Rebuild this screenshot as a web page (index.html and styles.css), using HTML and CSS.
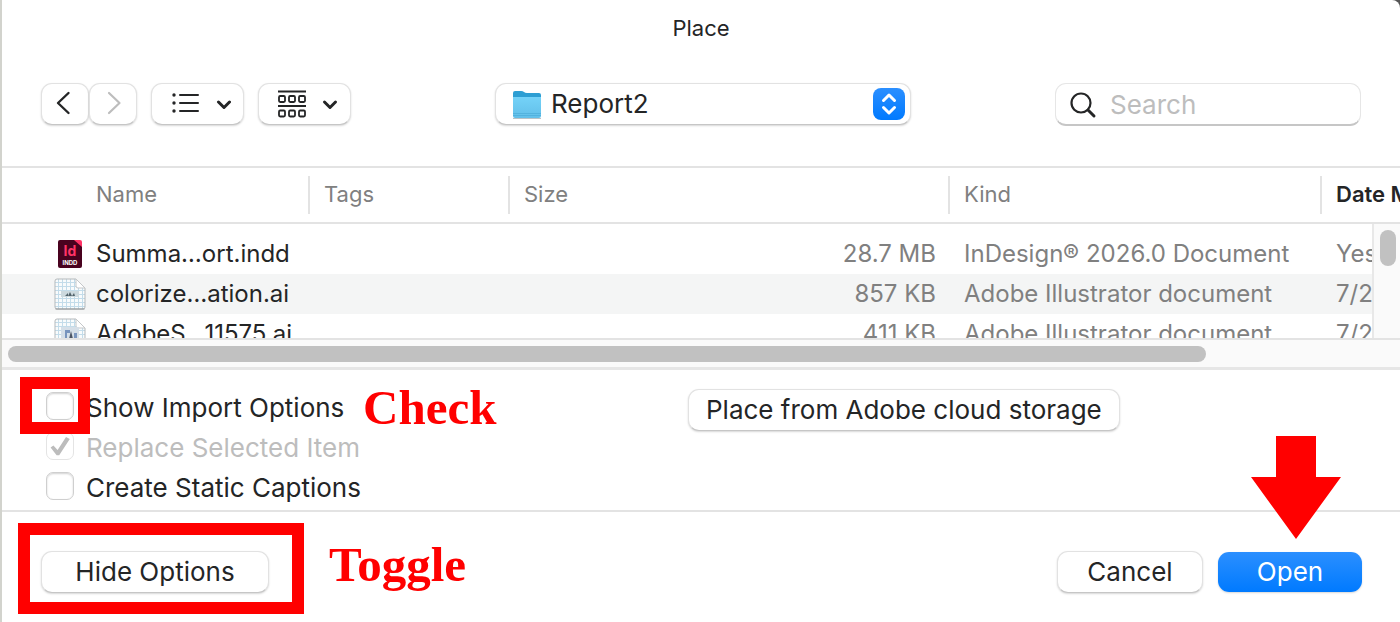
FILE: index.html
```
<!DOCTYPE html>
<html lang="en">
<head>
    <meta charset="UTF-8">
    <meta name="viewport" content="width=device-width, initial-scale=1.0">
    <title>Place</title>
    <link rel="stylesheet" href="styles.css">
</head>
<body>
    <main class="dialog">
        <h1 class="title">Place</h1>

        <div class="toolbar">
            <div class="tool-group">
                <div class="nav">
                    <button class="btn nav-btn" aria-label="Back">
                        <svg width="20" height="24" viewBox="0 0 20 24" fill="none" stroke="#242526" stroke-width="2.4" stroke-linecap="round" stroke-linejoin="round"><path d="M13.500 2 L3 12 L13.500 22"/></svg>
                    </button>
                    <button class="btn nav-btn" aria-label="Forward" disabled>
                        <svg width="18" height="24" viewBox="0 0 18 24" fill="none" stroke="#bdbdbd" stroke-width="2.2" stroke-linecap="round" stroke-linejoin="round"><path d="M5 2 L15.500 12 L5 22"/></svg>
                    </button>
                </div>
                <button class="btn view-btn" aria-label="List view">
                    <svg width="28" height="22" viewBox="0 0 28 22" fill="none" stroke="#242526" stroke-width="2" stroke-linecap="round"><path d="M9 2H27M9 10H27M9 18H27"/><g fill="#242526" stroke="none"><circle cx="3" cy="2" r="1.7"/><circle cx="3" cy="10" r="1.7"/><circle cx="3" cy="18" r="1.7"/></g></svg>
                    <svg width="16" height="12" viewBox="0 0 16 12" fill="none" stroke="#242526" stroke-width="3" stroke-linecap="round" stroke-linejoin="round"><path d="M3.500 4 L9 9.500 L14.500 4"/></svg>
                </button>
                <button class="btn view-btn" aria-label="Group by">
                    <svg width="28" height="28" viewBox="0 0 28 28" fill="none" stroke="#242526" stroke-width="1.8"><path d="M0 1.5H28M0 16H28"/><rect x="1" y="6" width="6" height="6" rx="1.2"/><rect x="11" y="6" width="6" height="6" rx="1.2"/><rect x="21" y="6" width="6" height="6" rx="1.2"/><rect x="1" y="20.5" width="6" height="6" rx="1.2"/><rect x="11" y="20.5" width="6" height="6" rx="1.2"/><rect x="21" y="20.5" width="6" height="6" rx="1.2"/></svg>
                    <svg width="16" height="12" viewBox="0 0 16 12" fill="none" stroke="#242526" stroke-width="3" stroke-linecap="round" stroke-linejoin="round"><path d="M2.500 4 L8 9.500 L13.500 4"/></svg>
                </button>
            </div>

            <div class="location">
                <svg class="folder" width="32" height="30" viewBox="0 0 32 30">
                    <defs>
                        <linearGradient id="folder-front" x1="0" y1="0" x2="0" y2="1"><stop offset="0" stop-color="#74d2f8"/><stop offset="1" stop-color="#62bfe9"/></linearGradient>
                    </defs>
                    <path d="M3 28.500H31" stroke="#b9c2c6"/>
                    <path d="M3 3Q3 1 5 1H11Q13 1 14 2T17 3H29Q31 3 31 5V12H3Z" fill="#2d9ed3"/>
                    <path d="M3 7H31V26Q31 28 29 28H5Q3 28 3 26Z" fill="url(#folder-front)"/>
                    <path d="M3 23.500H31M3 25.500H31" stroke="#4aacd8" stroke-width=".7"/>
                </svg>
                <select class="btn location-select" aria-label="Folder">
                    <option>Report2</option>
                </select>
                <svg class="stepper" width="32" height="32" viewBox="0 0 32 32" fill="none" stroke="#fff" stroke-width="3" stroke-linecap="round" stroke-linejoin="round"><path d="M10.500 12.500 L16 7 L21.500 12.500M10.500 19.500 L16 25 L21.500 19.500"/></svg>
            </div>

            <div class="search">
                <svg class="search-icon" width="28" height="28" viewBox="0 0 28 28" fill="none" stroke="#242526" stroke-linecap="round"><circle cx="12" cy="12" r="9.500" stroke-width="2.200"/><path d="M19 19 L25 25" stroke-width="3"/></svg>
                <input class="search-input" type="search" placeholder="Search" aria-label="Search">
            </div>
        </div>

        <section class="file-list">
            <table class="files">
                <colgroup>
                    <col class="col-name">
                    <col class="col-tags">
                    <col class="col-size">
                    <col class="col-kind">
                    <col class="col-date">
                </colgroup>
                <thead>
                    <tr>
                        <th class="name">Name</th>
                        <th>Tags</th>
                        <th>Size</th>
                        <th>Kind</th>
                        <th class="sorted">Date Modified</th>
                    </tr>
                </thead>
                <tbody>
                    <tr>
                        <td class="name">
                            <div class="file">
                                <svg width="32" height="32" viewBox="0 0 32 32"><path d="M6 2H22L28 8V28Q28 30 26 30H6Q4 30 4 28V4Q4 2 6 2Z" fill="#49021f"/><path d="M20 2H26Q28 2 28 4V9Z" fill="#ff3366"/><text class="id-mark" x="16" y="18" text-anchor="middle">Id</text><text class="id-type" x="16" y="27" text-anchor="middle">INDD</text></svg>
                                Summa…ort.indd
                            </div>
                        </td>
                        <td></td>
                        <td class="size">28.7 MB</td>
                        <td>InDesign® 2026.0 Document</td>
                        <td>Yesterday</td>
                    </tr>
                    <tr>
                        <td class="name">
                            <div class="file">
                                <svg width="32" height="32" viewBox="0 0 32 32">
                                    <defs>
                                        <pattern id="sheet" width="4" height="4" patternUnits="userSpaceOnUse"><rect width="4" height="4" fill="#f8fbfc"/><path d="M0 .5H4M.5 0V4" stroke="#c3dcea"/></pattern>
                                    </defs>
                                    <path d="M3 1H22L31 10V29Q31 31 29 31H3Q1 31 1 29V3Q1 1 3 1Z" fill="url(#sheet)" stroke="#b5b9bb"/>
                                    <path d="M1.500 31H30.500" stroke="#8f9496"/>
                                    <path d="M22 1V8Q22 10 24 10H31Z" fill="#fff" stroke="#c4c7c9"/>
                                    <rect x="7" y="13" width="18" height="6" fill="#ccd9de"/>
                                    <path d="M11 18L14 15V18L16 14L18 18L20 15L21 18Z" fill="#52636b"/>
                                </svg>
                                colorize…ation.ai
                            </div>
                        </td>
                        <td></td>
                        <td class="size">857 KB</td>
                        <td>Adobe Illustrator document</td>
                        <td>7/2</td>
                    </tr>
                    <tr>
                        <td class="name">
                            <div class="file">
                                <svg width="32" height="32" viewBox="0 0 32 32">
                                    <path d="M3 1H22L31 10V29Q31 31 29 31H3Q1 31 1 29V3Q1 1 3 1Z" fill="url(#sheet)" stroke="#b5b9bb"/>
                                    <path d="M22 1V8Q22 10 24 10H31Z" fill="#fff" stroke="#c4c7c9"/>
                                    <rect x="7" y="9" width="18" height="14" fill="#d5dfe8"/>
                                    <path d="M11 12H16V15H13V22H11ZM20 15H23V21H20Z" fill="#7894bd"/>
                                    <path d="M15 21L17 13L19 21Z" fill="#4c5564"/>
                                </svg>
                                AdobeS…11575.ai
                            </div>
                        </td>
                        <td></td>
                        <td class="size">411 KB</td>
                        <td>Adobe Illustrator document</td>
                        <td>7/2</td>
                    </tr>
                </tbody>
            </table>
            <div class="vscroll"><div class="vthumb"></div></div>
        </section>
        <div class="hscroll"><div class="hthumb"></div></div>

        <section class="options">
            <div class="checks">
                <label class="check"><input type="checkbox">Show Import Options</label>
                <label class="check disabled"><input type="checkbox" checked disabled>Replace Selected Item</label>
                <label class="check"><input type="checkbox">Create Static Captions</label>
            </div>
            <button class="btn cloud-btn">Place from Adobe cloud storage</button>
            <span class="mark mark-check"></span>
            <span class="note note-check">Check</span>
        </section>

        <footer class="actions">
            <button class="btn hide-btn">Hide Options</button>
            <div class="confirm">
                <button class="btn cancel-btn">Cancel</button>
                <button class="btn open-btn">Open</button>
            </div>
            <span class="mark mark-toggle"></span>
            <span class="note note-toggle">Toggle</span>
            <svg class="arrow" width="92" height="103" viewBox="0 0 92 103"><path d="M26 0H66V41H91L46 103L1 41H26Z" fill="#f00"/></svg>
        </footer>
    </main>
</body>
</html>
```
FILE: styles.css
```
:root {
    --text: #242526;
    --muted: #808080;
    --faint: #bdbdbd;
    --line: #e3e3e3;
    --blue: #007aff;
    --red: #f00;
}

* {
    box-sizing: border-box;
}

body {
    margin: 0;
    background: #555;
    color: var(--text);
    font-family: Inter, "Liberation Sans", sans-serif;
    font-size: 26px;
}

.dialog {
    min-height: 100vh;
    display: flex;
    flex-direction: column;
    background: #fff;
    border-left: 2px solid #d2d3cd;
    border-top-right-radius: 8px;
    overflow: hidden;
}

.title {
    margin: 0;
    padding-top: 12px;
    font-size: 22px;
    font-weight: 400;
    line-height: 32px;
    text-align: center;
}

/* buttons */
.btn {
    height: 42px;
    padding: 0 0 2px;
    border: 1px solid #e2e2e2;
    border-bottom-color: #c6c6c6;
    border-radius: 11px;
    background: #fff;
    box-shadow: 0 1px 2px rgba(0, 0, 0, 0.16);
    color: var(--text);
    font: inherit;
}

/* toolbar */
.toolbar {
    display: flex;
    justify-content: space-between;
    padding: 39px;
    padding-bottom: 40px;
}

.tool-group {
    display: flex;
    gap: 14px;
}

.nav {
    display: flex;
}

.nav-btn {
    width: 48px;
    display: flex;
    align-items: center;
    justify-content: center;
}

.view-btn {
    width: 93px;
    display: flex;
    align-items: center;
    justify-content: center;
    gap: 16px;
    padding: 0 0 0 6px;
}

.location {
    position: relative;
    width: 416px;
}

.location-select {
    width: 100%;
    padding-left: 55px;
    appearance: none;
}

.folder {
    position: absolute;
    left: 15px;
    top: 7px;
}

.stepper {
    position: absolute;
    right: 6px;
    top: 5px;
    border-radius: 8px;
    background: linear-gradient(#2b8fff, var(--blue));
    pointer-events: none;
}

.search {
    position: relative;
    width: 306px;
}

.search-input {
    width: 100%;
    height: 43px;
    padding: 0 12px 0 54px;
    border: 1px solid #e6e6e6;
    border-bottom: 2px solid #c6c6c6;
    border-radius: 11px;
    background: #fff;
    font: inherit;
}

.search-input::placeholder {
    color: var(--faint);
}

.search-icon {
    position: absolute;
    left: 14px;
    top: 8px;
}

/* file list */
.file-list {
    position: relative;
    height: 174px;
    border-top: 2px solid var(--line);
    border-bottom: 2px solid var(--line);
    overflow: hidden;
    font-size: 24px;
}

.files {
    width: 100%;
    table-layout: fixed;
    border-spacing: 0;
}

.col-name {
    width: 306px;
}

.col-tags {
    width: 200px;
}

.col-kind {
    width: 372px;
}

.col-date {
    width: 80px;
}

.files th {
    height: 56px;
    padding: 0 0 2px 16px;
    border-bottom: 2px solid var(--line);
    background: linear-gradient(var(--line), var(--line)) left center / 2px 38px no-repeat;
    color: var(--muted);
    font-size: 22px;
    font-weight: 400;
    text-align: left;
    white-space: nowrap;
    overflow: hidden;
}

.files th.name {
    padding-left: 94px;
    background: none;
}

.files th.sorted {
    color: var(--text);
    font-weight: 600;
}

.files tbody::before {
    content: "";
    display: block;
    height: 10px;
}

.files td {
    height: 40px;
    padding: 0 0 2px 16px;
    color: var(--muted);
    white-space: nowrap;
    overflow: hidden;
}

.files tbody tr:nth-child(even) {
    background: #f4f5f5;
}

.files td.name {
    padding: 0 0 0 52px;
    color: var(--text);
}

.files td.size {
    padding-right: 12px;
    text-align: right;
}

.file {
    display: flex;
    align-items: center;
    gap: 10px;
    line-height: 30px;
}

.id-mark {
    fill: #ff3366;
    font-size: 14px;
    font-weight: 700;
}

.id-type {
    fill: #fff;
    font-size: 6px;
    font-weight: 700;
}

.vscroll {
    position: absolute;
    top: 56px;
    right: 0;
    bottom: 0;
    width: 28px;
    padding: 6px 4px;
    border-left: 2px solid #e8e8e8;
    background: #fafafa;
}

.vthumb {
    width: 16px;
    height: 36px;
    margin-left: 2px;
    border-radius: 8px;
    background: #c1c1c1;
}

.hscroll {
    height: 30px;
    padding: 6px;
    border-bottom: 3px solid #e6e6e6;
    background: #fafafa;
}

.hthumb {
    width: calc(100% - 188px);
    height: 16px;
    border-radius: 8px;
    background: #c1c1c1;
}

/* import options */
.options {
    position: relative;
    display: flex;
    align-items: flex-start;
    height: 142px;
    padding: 16px 44px;
    border-bottom: 2px solid var(--line);
}

.checks {
    flex: 0 0 49%;
}

.check {
    display: flex;
    align-items: flex-start;
    gap: 12px;
    height: 40px;
    padding-top: 6px;
    line-height: 32px;
}

.check input {
    appearance: none;
    width: 28px;
    height: 28px;
    margin: 0;
    border: 1px solid #cfcfcf;
    border-radius: 7px;
    background: #fff;
    box-shadow: inset 0 1px 2px rgba(0, 0, 0, 0.18);
}

.check.disabled {
    color: var(--faint);
}

.check.disabled input {
    display: grid;
    place-items: center;
    border-color: #e4e4e4;
    box-shadow: none;
}

.check.disabled input::before {
    content: "";
    width: 20px;
    height: 20px;
    background: #bcbcbc;
    clip-path: polygon(3% 57%, 17% 47%, 38% 70%, 80% 5%, 99% 15%, 46% 96%, 33% 96%);
}

.cloud-btn {
    width: 432px;
    margin-top: 3px;
}

/* footer */
.actions {
    position: relative;
    flex: 1;
    display: flex;
    justify-content: space-between;
    align-items: flex-start;
    padding: 39px 38px 0 39px;
}

.hide-btn {
    width: 228px;
}

.confirm {
    display: flex;
    align-items: center;
    gap: 15px;
}

.cancel-btn {
    width: 146px;
}

.open-btn {
    width: 144px;
    height: 40px;
    border: none;
    background: linear-gradient(#2b8fff, var(--blue));
    color: #fff;
}

/* red callouts */
.mark {
    position: absolute;
    border: 12px solid var(--red);
    pointer-events: none;
}

.mark-check {
    left: 18px;
    top: 7px;
    width: 70px;
    height: 57px;
}

.mark-toggle {
    left: 16px;
    top: 11px;
    width: 286px;
    height: 91px;
}

.note {
    position: absolute;
    color: var(--red);
    font-family: "Liberation Serif", serif;
    font-size: 49px;
    font-weight: 700;
    line-height: 56px;
}

.note-check {
    left: 361px;
    top: 10px;
}

.note-toggle {
    left: 327px;
    top: 25px;
}

.arrow {
    position: absolute;
    right: 58px;
    top: -76px;
}
```
